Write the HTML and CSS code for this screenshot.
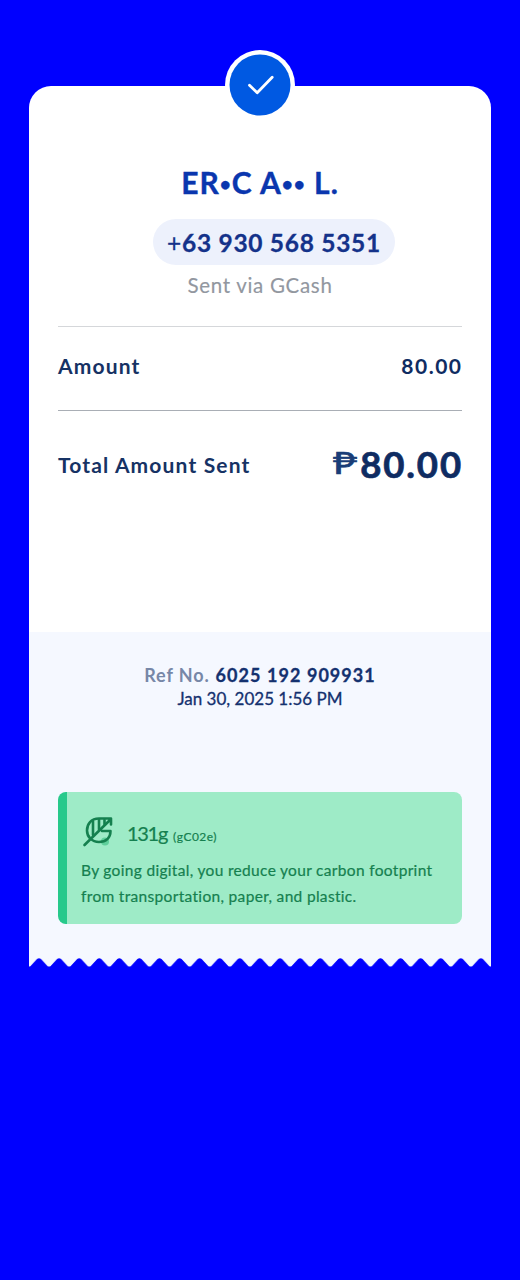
FILE: index.html
```html
<!DOCTYPE html>
<html lang="en">
<head>
<meta charset="utf-8">
<title>Receipt</title>
<link rel="stylesheet" href="styles.css">
</head>
<body>
<main class="receipt">
  <section class="summary">
    <div class="badge">
      <svg viewBox="0 0 70 70" width="70" height="70"><circle cx="35" cy="35" r="35" fill="#fff"/><circle cx="35" cy="35" r="30.5" fill="#0059e2"/><path d="M24.500 35.200l7.700 7.600 15-15.500" fill="none" stroke="#fff" stroke-width="2.800" stroke-linecap="round" stroke-linejoin="round"/></svg>
    </div>
    <h1 class="name">ER<span class="dot">•</span>C A<span class="dot">••</span> L.</h1>
    <div class="phone"><span class="plus">+</span>63 930 568 5351</div>
    <p class="via">Sent via GCash</p>
    <div class="row row-amount"><span class="label">Amount</span><span class="value">80.00</span></div>
    <div class="row row-total"><span class="label">Total Amount Sent</span><span class="total"><span class="peso">₱</span><span class="total-value">80.00</span></span></div>
  </section>
  <section class="details">
    <p class="ref"><span class="ref-label">Ref No.</span><span class="ref-number">6025 192 909931</span></p>
    <p class="date">Jan 30, 2025 1:56 PM</p>
    <aside class="eco">
      <div class="eco-head">
        <svg class="leaf" viewBox="0 0 32 32" width="32" height="32"><circle cx="24" cy="25.500" r="4" fill="#5fcf9b"/><g fill="none" stroke="#15804f" stroke-width="2.600" stroke-linecap="round" stroke-linejoin="round"><path d="M3.500 29L30 3M30 8.500V2.500H18C10 2.500 6 8 6 14.500S11 26 18 26 29.500 22 29.500 15H21"/><path d="M12 5V19M18 3.500V13.500M23.500 4V8"/></g></svg>
        <p class="saved"><span class="grams">131g</span><span class="unit">(gC02e)</span></p>
      </div>
      <p class="eco-text">By going digital, you reduce your carbon footprint<br>from transportation, paper, and plastic.</p>
    </aside>
  </section>
  <svg class="teeth" viewBox="0 0 462 9" width="462" height="9"><defs><pattern id="tooth" width="20.087" height="9" patternUnits="userSpaceOnUse"><path d="M0 0H20.087V8.500Q19 9 17.500 7L12 1Q10 -.6 8 1L2.500 7Q1 9 0 8.500Z" fill="#f5f8ff"/></pattern></defs><rect width="462" height="9" fill="url(#tooth)"/></svg>
</main>
</body>
</html>
```
FILE: styles.css
```css
* { box-sizing: border-box; }
body { margin: 0; min-height: 1280px; background: #0000ff; font-family: Lato, "Liberation Sans", sans-serif; color: #0f2c62; }
h1, p { margin: 0; }
.receipt { width: 462px; margin: 0 auto; padding-top: 86px; }
.summary { position: relative; height: 546px; padding: 76px 29px 0; background: #fff; border-radius: 22px 22px 0 0; display: flex; flex-direction: column; align-items: center; }
.badge { position: absolute; top: -36px; left: 196px; }
.badge svg, .teeth, .leaf { display: block; }
.name { height: 40px; line-height: 40px; font-size: 30px; font-weight: 700; letter-spacing: 1px; color: #0a36ae; white-space: nowrap; -webkit-text-stroke: 0.4px; }
.dot { font-size: 19px; line-height: 0; vertical-align: 3px; }
.phone { margin: 17px 0 0 28px; width: 242px; height: 46px; line-height: 48px; border-radius: 23px; background: #edf1fc; text-align: center; font-size: 24.5px; font-weight: 700; letter-spacing: 0.7px; color: #14328a; white-space: nowrap; -webkit-text-stroke: 0.3px; }
.plus { font-weight: 400; }
.via { margin-top: 5px; height: 30px; line-height: 30px; font-size: 20.5px; letter-spacing: 0.7px; color: #92979f; -webkit-text-stroke: 0.15px; }
.row { width: 404px; display: flex; align-items: center; justify-content: space-between; white-space: nowrap; font-size: 21px; font-weight: 700; }
.row-amount { margin-top: 26px; height: 84px; padding-bottom: 6px; border-top: 1px solid #d5d7da; }
.row-total { height: 110px; padding-bottom: 3px; border-top: 1px solid #a9aeb5; }
.label { letter-spacing: 1.15px; color: #163264; }
.value { letter-spacing: 1.5px; margin-right: -0.5px; }
.total { display: flex; align-items: center; }
.total-value { font-size: 36.5px; letter-spacing: 1.9px; margin-right: -1px; -webkit-text-stroke: 0.7px; }
.peso { font-size: 31px; transform: scaleX(1.35); margin: -4px 6px 0 0; font-weight: 400; -webkit-text-stroke: 0.7px; color: #193d77; }
.details { height: 326px; padding: 30px 29px 0; background: #f5f8ff; }
.ref { height: 26px; line-height: 27px; display: flex; justify-content: center; gap: 6px; font-size: 18px; font-weight: 700; white-space: nowrap; }
.ref-label { letter-spacing: 0.9px; color: #7787a7; }
.ref-number { letter-spacing: 1.05px; color: #14316f; -webkit-text-stroke: 0.3px; }
.date { height: 22px; line-height: 22px; text-align: center; font-size: 17px; color: #14316f; -webkit-text-stroke: 0.3px; }
.eco { margin-top: 82px; height: 132px; border-radius: 8px; border-left: 9px solid #27c98b; background: #9eebc7; padding: 23px 0 0 14px; color: #15804f; -webkit-text-stroke: 0.2px; }
.eco-head { display: flex; align-items: center; height: 34px; }
.saved { display: flex; align-items: baseline; margin: 1px 0 0 14px; }
.grams { font-size: 20px; letter-spacing: -1.3px; }
.unit { margin-left: 6px; font-size: 12px; letter-spacing: 0.5px; }
.eco-text { margin-top: 8px; font-size: 15.5px; line-height: 26px; letter-spacing: 0.32px; white-space: nowrap; }
```
